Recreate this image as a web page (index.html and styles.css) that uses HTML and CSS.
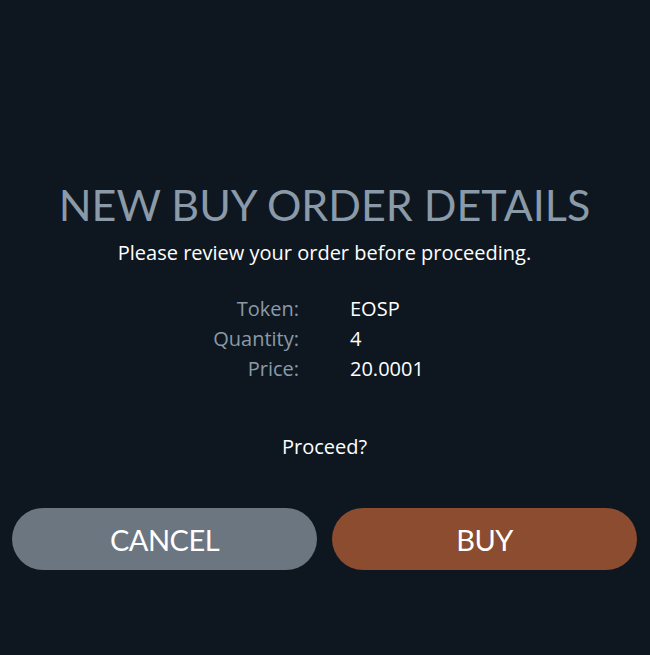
FILE: index.html
```html
<!DOCTYPE html>
<html lang="en">
    <head>
        <meta charset="UTF-8" />
        <meta name="viewport" content="width=device-width, initial-scale=1.0" />
        <title>New Buy Order</title>
        <link rel="stylesheet" href="styles.css">
    </head>
    <body>
        <div class="order-container">
            <h2>NEW BUY ORDER DETAILS</h2>
            <p class="subtitle">Please review your order before proceeding.</p>
            <div class="details">
                <span class="label">Token:</span>
                <span class="value">EOSP</span>
                <span class="label">Quantity:</span>
                <span class="value">4</span>
                <span class="label">Price:</span>
                <span class="value">20.0001</span>
            </div>
            <p class="question">Proceed?</p>
            <div class="actions">
                <button class="btn cancel">CANCEL</button>
                <button class="btn buy">BUY</button>
            </div>
        </div>
    </body>
</html>
```

FILE: styles.css
```css
:root {
  --bg: #0e1720;
  --muted: #8a9aa8;
  --text: #ffffff;
  --cancel: #6c7680;
  --buy: #8b4c2f;
  --font: 'Open Sans', sans-serif;
  --font-title: 'Lato', sans-serif;
}

* {
  box-sizing: border-box;
  margin: 0;
  padding: 0;
}

body {
  font-family: var(--font);
  background-color: var(--bg);
  color: var(--text);
  min-height: 100vh;
}

.order-container {
  padding: 181px 13px 0 12px;
  text-align: center;
}

h2 {
  font-family: var(--font-title);
  font-weight: 400;
  font-size: 43px;
  line-height: 48px;
  color: var(--muted);
}

.subtitle {
  font-size: 20px;
  line-height: 27px;
  margin-top: 10px;
}

.details {
  display: grid;
  grid-template-columns: 287px 1fr;
  column-gap: 51px;
  margin-top: 28px;
  font-size: 20px;
  line-height: 30px;
  text-align: left;
}

.label {
  text-align: right;
  color: var(--muted);
}

.question {
  font-size: 20px;
  line-height: 27px;
  margin-top: 49px;
}

.actions {
  display: flex;
  gap: 15px;
  margin-top: 48px;
}

.btn {
  flex: 1;
  height: 62px;
  border: none;
  border-radius: 31px;
  font-family: var(--font-title);
  font-size: 29px;
  letter-spacing: -0.5px;
  color: var(--text);
  cursor: pointer;
}

.cancel { background: var(--cancel); }
.buy    { background: var(--buy); }
```
